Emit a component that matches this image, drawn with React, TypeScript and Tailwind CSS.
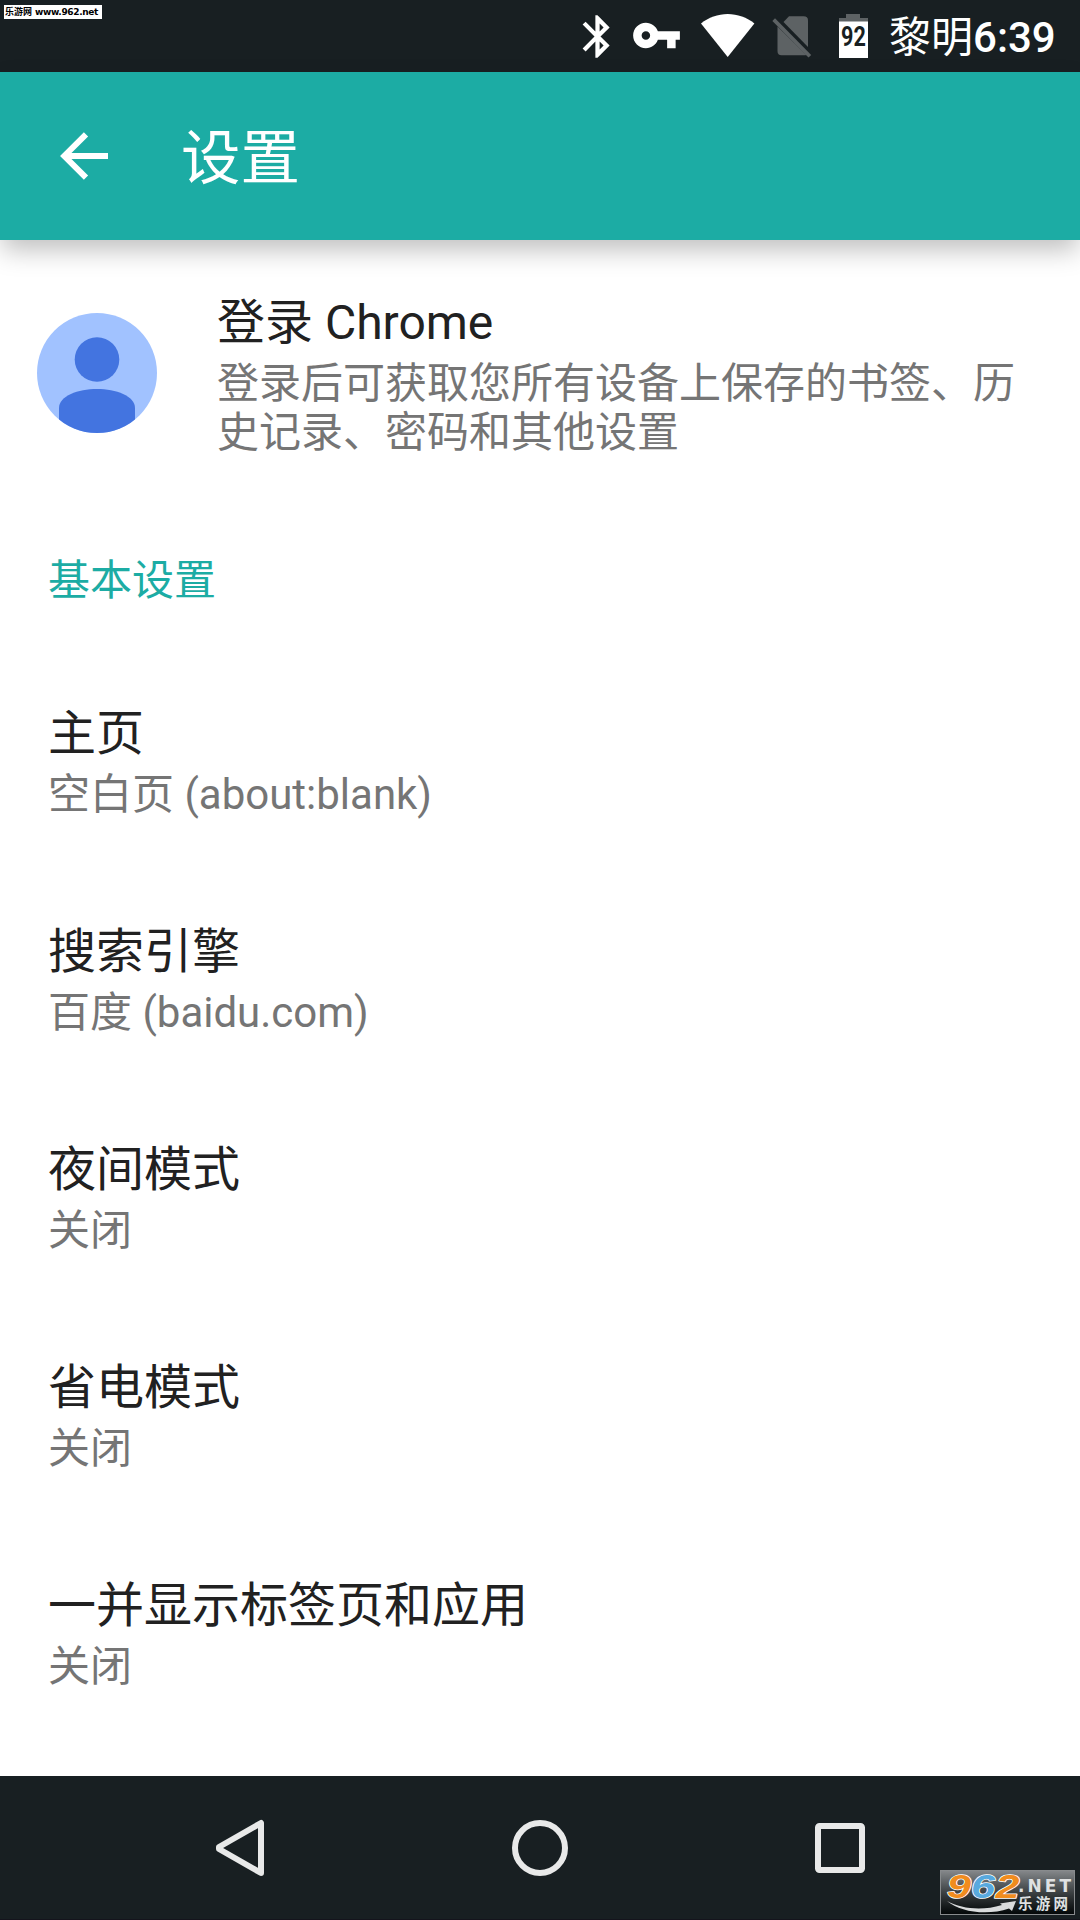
import React from "react";

const settings = [
  { title: "主页", value: "空白页 (about:blank)" },
  { title: "搜索引擎", value: "百度 (baidu.com)" },
  { title: "夜间模式", value: "关闭" },
  { title: "省电模式", value: "关闭" },
  { title: "一并显示标签页和应用", value: "关闭" },
];

function StatusBar() {
  return (
    <header className="relative flex h-[72px] items-start bg-[#181f22] pl-[572px] text-white">
      <svg className="mt-[11px] h-[51px] w-[51px] shrink-0" viewBox="0 0 24 24" fill="#fff">
        <path d="M17.71 7.71L12 2h-1v7.59L6.41 5 5 6.41 10.59 12 5 17.59 6.41 19 11 14.41V22h1l5.71-5.71-4.3-4.29 4.3-4.29zM13 5.83l1.88 1.88L13 9.59V5.83zm1.88 10.46L13 18.17v-3.76l1.88 1.88z" />
      </svg>
      <svg className="ml-[8px] mt-[10px] h-[51px] w-[51px] shrink-0" viewBox="0 0 24 24" fill="#fff">
        <path d="M12.65 10C11.83 7.67 9.61 6 7 6c-3.31 0-6 2.69-6 6s2.69 6 6 6c2.61 0 4.83-1.67 5.65-4H17v4h4v-4h2v-4H12.65zM7 14c-1.1 0-2-.9-2-2s.9-2 2-2 2 .9 2 2-.9 2-2 2z" />
      </svg>
      <svg className="ml-[19px] mt-[14px] h-[43px] w-[54px] shrink-0" viewBox="0 0 54 43" fill="#fff">
        <path d="M0 9.5C7.5 3.5 17 0 26.700 0S46 3.500 53.400 9.500L26.700 43z" />
      </svg>
      <svg className="ml-[17px] mt-[16px] h-[43px] w-[41px] shrink-0" viewBox="0 0 41 43" fill="#5d6264">
        <path d="M11.500 6 17 .3H31.500Q36 .3 36 4.500V31z" />
        <path d="M5.500 10.500 34.500 39Q33.500 39.300 31.500 39.300H9.500Q5.500 39.300 5.500 35z" />
        <path d="M3 2.300.4 5 36.500 41.500 39.200 38.900z" />
      </svg>
      <div className="relative ml-[26px] mt-[14px] h-[44px] w-[29px] shrink-0">
        <svg className="h-full w-full" viewBox="0 0 29 44">
          <path d="M7 0H21V4H29V8H0V4H7z" fill="#5d6264" />
          <path d="M0 7.500H29V44H0z" fill="#fff" />
        </svg>
        <span className="absolute left-[2px] top-[11px] origin-left scale-x-[.8] text-[27px] font-bold leading-[24px] text-[#181f22]">92</span>
      </div>
      <div className="ml-[21px] mt-[13px] whitespace-nowrap text-[42px] leading-[49px]">
        <span className="font-normal">黎明</span>
        <span className="font-medium">6:39</span>
      </div>
      <div className="absolute left-[4px] top-[5px] flex h-[14px] w-[98px] items-center whitespace-nowrap bg-white pl-[1px] text-black">
        <span className="text-[9px] font-bold leading-none">乐游网</span>
        <span className="ml-[3px] font-['DejaVu_Sans'] text-[9px] font-bold leading-none tracking-[-.35px]">www.962.net</span>
      </div>
    </header>
  );
}

function AppBar() {
  return (
    <div className="relative z-10 flex h-[168px] items-center bg-[#1caca4] pl-[60px] text-white shadow-[0_12px_24px_-2px_rgba(0,0,0,0.25)]">
      <svg className="h-[48px] w-[48px] shrink-0" viewBox="0 0 48 48" fill="none" stroke="#fff" strokeWidth="6">
        <path d="M48 24H6M26 2.300 4.300 24 26 45.700" />
      </svg>
      <h1 className="ml-[73px] mt-[5px] text-[59.500px] leading-[70px]">设置</h1>
    </div>
  );
}

function Account() {
  return (
    <section className="flex h-[226px] pl-[37px]">
      <svg className="mt-[73px] h-[120px] w-[120px] shrink-0" viewBox="0 0 120 120">
        <clipPath id="disc">
          <circle cx="60" cy="60" r="60" />
        </clipPath>
        <g clipPath="url(#disc)">
          <path d="M0 0H120V120H0z" fill="#a1c2ff" />
          <circle cx="60" cy="46.500" r="22.300" fill="#4374e0" />
          <path d="M22 120V95C22 83 41 76 60 76S98 83 98 95V120z" fill="#4374e0" />
        </g>
      </svg>
      <div className="ml-[60px] mt-[53px]">
        <h2 className="text-[48px] leading-[60px] text-[#212121]">登录 Chrome</h2>
        <p className="mt-[6px] w-[810px] text-[42px] leading-[49px] text-[#757575]">登录后可获取您所有设备上保存的书签、历史记录、密码和其他设置</p>
      </div>
    </section>
  );
}

function NavBar() {
  return (
    <nav className="relative flex h-[144px] items-center border-b border-[#14141c] bg-[#181f22] pl-[210px]">
      <svg className="h-[60px] w-[60px]" viewBox="0 0 60 60" fill="none" stroke="#e8e9e9" strokeWidth="6" strokeLinejoin="round">
        <path d="M51 5V55L9 31V29z" />
      </svg>
      <svg className="ml-[240px] h-[60px] w-[60px]" viewBox="0 0 60 60" fill="none" stroke="#e8e9e9" strokeWidth="6">
        <circle cx="30" cy="30" r="25" />
      </svg>
      <svg className="ml-[240px] h-[60px] w-[60px]" viewBox="0 0 60 60" fill="none" stroke="#e8e9e9" strokeWidth="6">
        <rect x="8" y="8" width="44" height="44" rx="1.500" strokeLinejoin="round" />
      </svg>
      <div className="absolute left-[940px] top-[94px] h-[45px] w-[135px] border border-[#888b8d] bg-gradient-to-b from-[#84878a] via-[#3c4143] to-[#050809]">
        <svg className="h-full w-full overflow-visible" viewBox="1 1 133 43">
          <g fontFamily="'Liberation Sans', sans-serif" fontWeight="bold" fontStyle="italic" fontSize="34" stroke="#fff" strokeWidth="1.500" paintOrder="stroke" strokeLinejoin="round">
            <text x="7" y="27.500" fill="#f08c1e" textLength="24" lengthAdjust="spacingAndGlyphs">9</text>
            <text x="31" y="27.500" fill="#58a9de" textLength="24" lengthAdjust="spacingAndGlyphs">6</text>
            <text x="55.500" y="27.500" fill="#f08c1e" textLength="24" lengthAdjust="spacingAndGlyphs">2</text>
          </g>
          <path d="M7 31C22 39 42 41 62 35L60 33.500 76 31 72 41 69 38.500C47 46 20 42 7 31z" fill="#d9dbdc" />
          <text x="78" y="22" fill="#dfe1e2" fontFamily="'DejaVu Sans', sans-serif" fontWeight="bold" fontSize="17" textLength="53">.NET</text>
          <text x="78" y="39" fill="#dfe1e2" fontFamily="'Noto Sans CJK SC', sans-serif" fontWeight="bold" fontSize="14.500" textLength="50">乐游网</text>
        </svg>
      </div>
    </nav>
  );
}

export default function App() {
  return (
    <div className="flex h-[1920px] w-[1080px] flex-col overflow-hidden bg-white font-[Roboto,'Noto_Sans_CJK_SC',sans-serif]" lang="zh-CN">
      <StatusBar />
      <AppBar />
      <main className="flex-1">
        <Account />
        <h3 className="mt-[90px] pl-[48px] text-[42px] leading-[49px] text-[#1caca4]">基本设置</h3>
        <ul className="mt-[47px]">
          {settings.map((item) => (
            <li key={item.title} className="h-[218px] pl-[48px] pt-[52px]">
              <div className="text-[48px] leading-[60px] text-[#212121]">{item.title}</div>
              <div className="mt-[6px] text-[42px] leading-[49px] text-[#757575]">{item.value}</div>
            </li>
          ))}
        </ul>
      </main>
      <NavBar />
    </div>
  );
}
